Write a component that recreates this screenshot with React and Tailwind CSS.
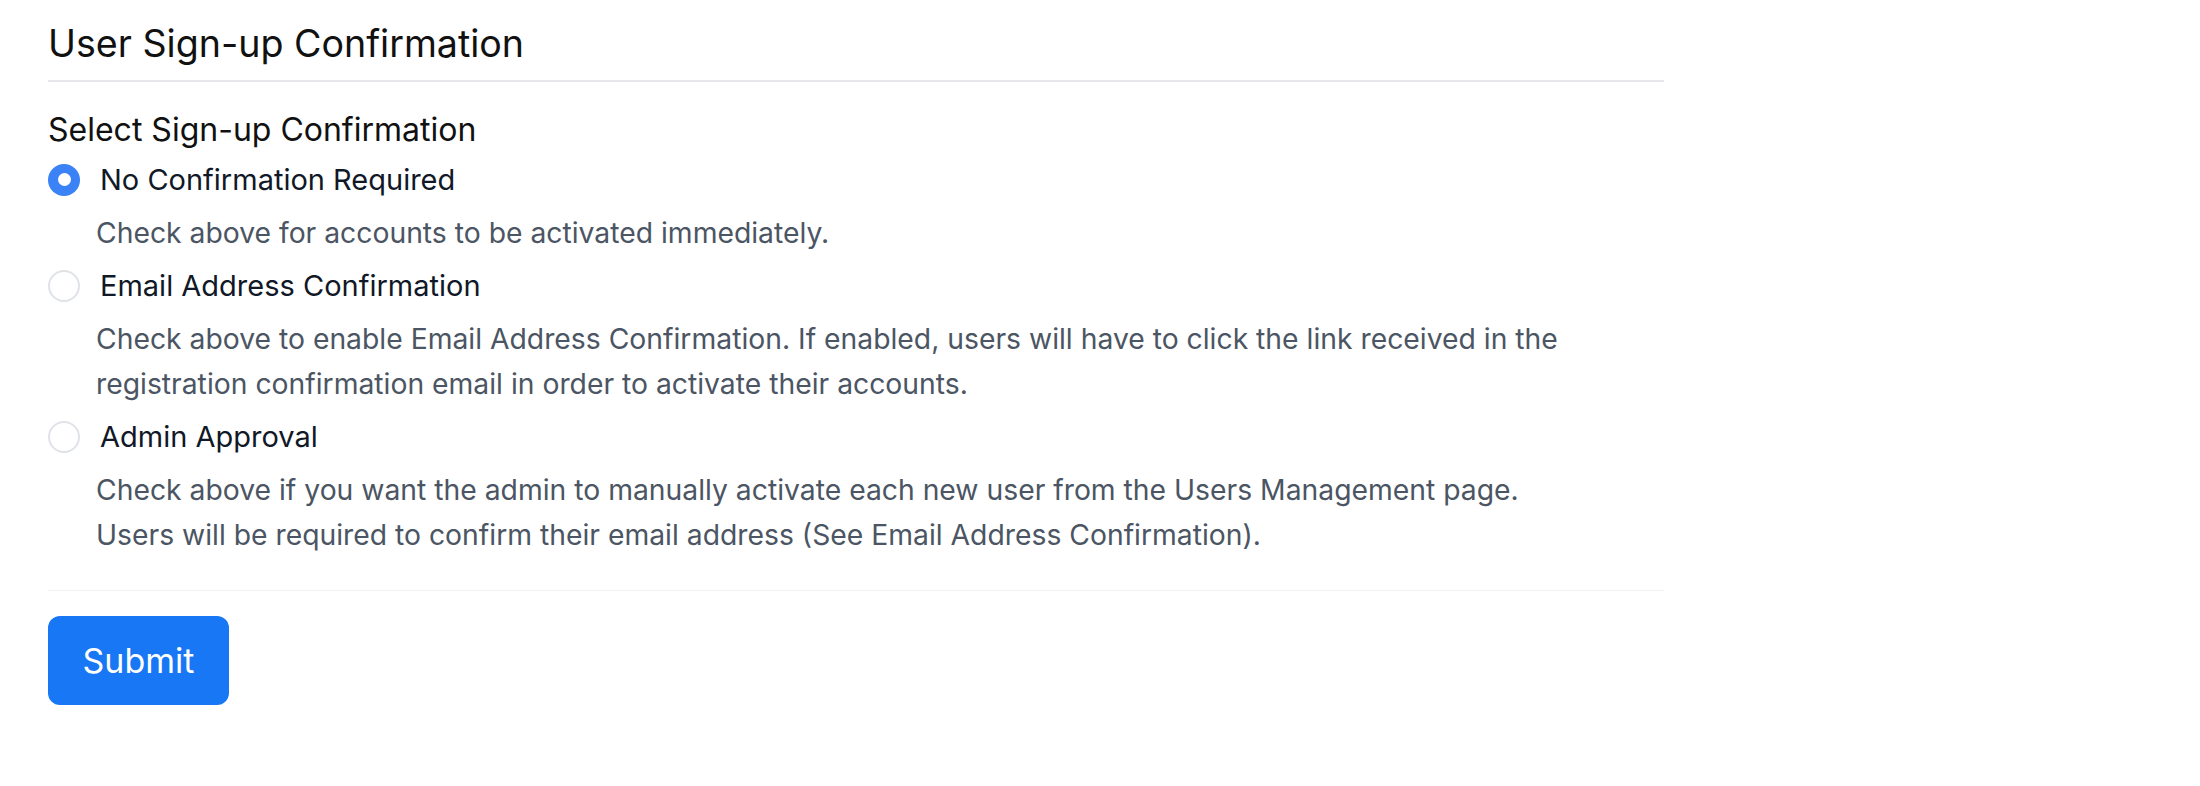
import React from "react";

function Radio({ checked }) {
  return checked ? (
    <span className="flex h-[32px] w-[32px] shrink-0 items-center justify-center rounded-full bg-[#3b82f6]">
      <span className="h-[13px] w-[13px] rounded-full bg-white" />
    </span>
  ) : (
    <span className="h-[32px] w-[32px] shrink-0 rounded-full border-2 border-[#dfe3e8] bg-white" />
  );
}

function Option({ checked, label, children }) {
  return (
    <div className="mb-[7px]">
      <label className="flex h-[45px] items-center">
        <Radio checked={checked} />
        <span className="ml-[20px] text-[29px] leading-[45px] text-[#111827]">{label}</span>
      </label>
      <div className="mt-[9px] pl-[48px] text-[28.3px] leading-[45px] text-[#4b5563]">{children}</div>
    </div>
  );
}

export default function App() {
  return (
    <div className="min-h-screen bg-white font-['Inter',sans-serif]">
      <div className="w-[1616px] pl-[48px] pt-[22px] box-content">
        <h1 className="border-b-2 border-[#e5e7eb] pb-[14px] text-[37.6px] leading-[44px] font-normal text-[#111111]">
          User Sign-up Confirmation
        </h1>
        <div className="mt-[25px] text-[32px] leading-[46px] text-[#111111]">Select Sign-up Confirmation</div>
        <div className="mt-[4px]">
          <Option checked label="No Confirmation Required">
            Check above for accounts to be activated immediately.
          </Option>
          <Option label="Email Address Confirmation">
            Check above to enable Email Address Confirmation. If enabled, users will have to click the link received in the
            <br />
            registration confirmation email in order to activate their accounts.
          </Option>
          <Option label="Admin Approval">
            Check above if you want the admin to manually activate each new user from the Users Management page.
            <br />
            Users will be required to confirm their email address (See Email Address Confirmation).
          </Option>
        </div>
        <div className="mt-[32px] border-t border-[#f0f1f3]" />
        <button className="mt-[25px] h-[89px] w-[181px] rounded-[12px] bg-[#1877f5] text-[34px] text-white">
          Submit
        </button>
      </div>
    </div>
  );
}
